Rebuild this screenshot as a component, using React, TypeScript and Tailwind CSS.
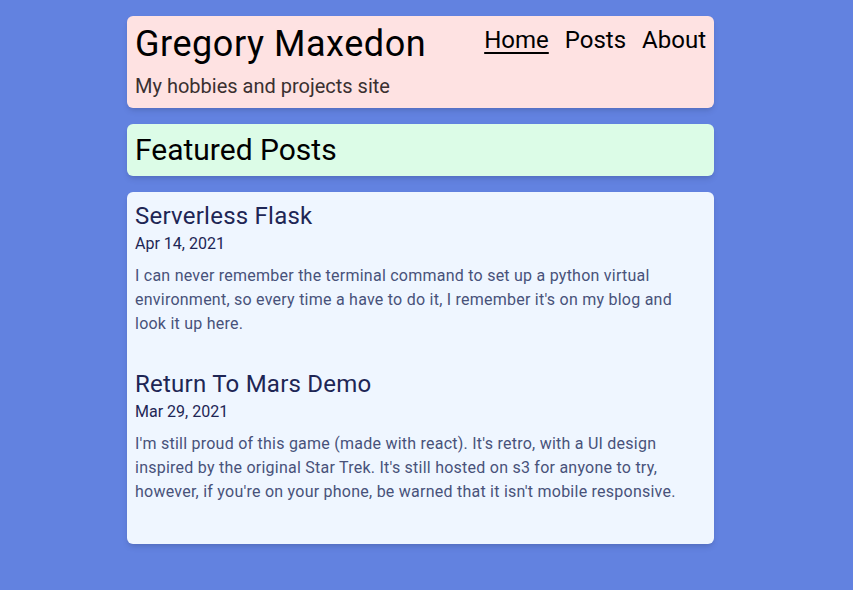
type Post = { title: string; date: string; lines: string[] }

const posts: Post[] = [
  {
    title: 'Serverless Flask',
    date: 'Apr 14, 2021',
    lines: [
      'I can never remember the terminal command to set up a python virtual',
      "environment, so every time a have to do it, I remember it's on my blog and",
      'look it up here.',
    ],
  },
  {
    title: 'Return To Mars Demo',
    date: 'Mar 29, 2021',
    lines: [
      "I'm still proud of this game (made with react). It's retro, with a UI design",
      "inspired by the original Star Trek. It's still hosted on s3 for anyone to try,",
      "however, if you're on your phone, be warned that it isn't mobile responsive.",
    ],
  },
]

export default function App() {
  return (
    <div className="min-h-[590px] bg-[#6282e0] pt-4 pb-8 font-['Roboto',sans-serif]">
      <div className="ml-[127px] flex w-[587px] flex-col gap-4">
        <header className="flex justify-between rounded-md bg-[#fee2e2] p-2 shadow-md">
          <div>
            <h1 className="text-4xl leading-10 tracking-[0.015em] text-black">Gregory Maxedon</h1>
            <p className="mt-2 text-xl leading-7 text-[#3a3030]">My hobbies and projects site</p>
          </div>
          <nav className="flex gap-4 text-2xl leading-8 text-black">
            <a href="#" className="underline decoration-2 underline-offset-4">Home</a>
            <a href="#">Posts</a>
            <a href="#">About</a>
          </nav>
        </header>

        <section className="rounded-md bg-[#dcfce7] p-2 shadow-md">
          <h2 className="text-3xl leading-9 text-black">Featured Posts</h2>
        </section>

        <section className="rounded-md bg-[#eff6ff] p-2 shadow-md">
          {posts.map((p) => (
            <article key={p.title} className="mb-8">
              <h3 className="text-2xl leading-8 tracking-[0.01em] text-[#1e2655]">{p.title}</h3>
              <p className="text-base leading-6 text-[#1e2655]">{p.date}</p>
              <p className="mt-2 whitespace-nowrap text-base leading-6 tracking-[0.015em] text-[#48527a]">
                {p.lines.map((l, i) => (
                  <span key={i}>
                    {l}
                    {i < p.lines.length - 1 && <br />}
                  </span>
                ))}
              </p>
            </article>
          ))}
        </section>
      </div>
    </div>
  )
}
